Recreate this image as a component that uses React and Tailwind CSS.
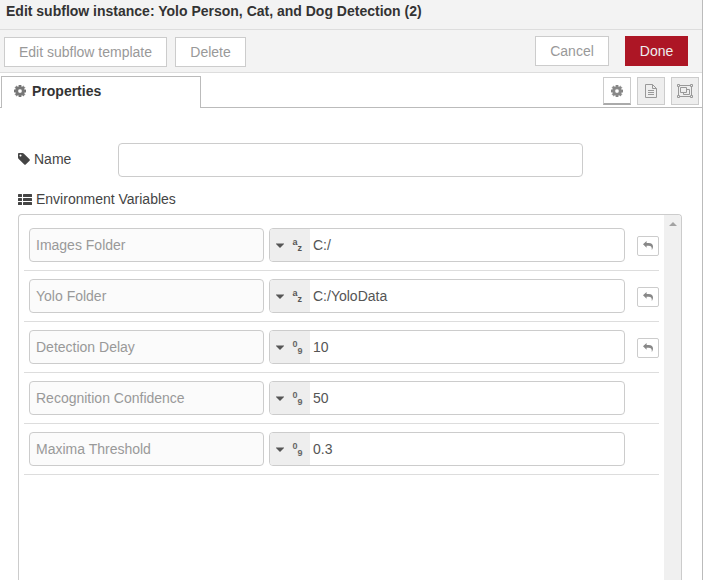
const COG =
  'M1024 896q0-106-75-181t-181-75-181 75-75 181 75 181 181 75 181-75 75-181zm512-109v222q0 12-8 23t-20 13l-185 28q-19 54-39 91 35 50 107 138 10 12 10 25t-9 23q-27 37-99 108t-94 71q-12 0-26-9l-138-108q-44 23-91 38-16 136-29 186-7 28-36 28h-222q-14 0-24.5-8.5t-11.5-21.5l-28-184q-49-16-90-37l-141 107q-10 9-25 9-14 0-25-11-126-114-165-168-7-10-7-23 0-12 8-23 15-21 51-66.5t54-70.5q-27-50-41-99l-183-27q-13-2-21-12.5t-8-23.5v-222q0-12 8-23t19-13l186-28q14-46 39-92-40-57-107-138-10-12-10-24 0-10 9-23 26-36 98.5-107.5t94.5-71.5q13 0 26 10l138 107q44-23 91-38 16-136 29-186 7-28 36-28h222q14 0 24.5 8.5t11.5 21.5l28 184q49 16 90 37l142-107q9-9 24-9 13 0 25 10 129 119 165 170 7 8 7 22 0 12-8 23-15 21-51 66.5t-54 70.5q26 50 41 98l183 28q13 2 21 12.5t8 23.5z';
const TAG =
  'M576 448q0-53-37.5-90.5t-90.5-37.5-90.5 37.5-37.5 90.5 37.5 90.5 90.5 37.5 90.5-37.5 37.5-90.5zm1067 576q0 53-37 90l-491 492q-39 37-91 37-53 0-90-37l-715-716q-38-37-64.5-101t-26.5-117v-416q0-52 38-90t90-38h416q53 0 117 26.5t102 64.5l715 714q37 39 37 91z';

const rows = [
  { label: 'Images Folder', type: 'str', value: 'C:/', reset: true },
  { label: 'Yolo Folder', type: 'str', value: 'C:/YoloData', reset: true },
  { label: 'Detection Delay', type: 'num', value: '10', reset: true },
  { label: 'Recognition Confidence', type: 'num', value: '50', reset: false },
  { label: 'Maxima Threshold', type: 'num', value: '0.3', reset: false },
];

function Cog({ className }) {
  return (
    <svg viewBox="0 128 1536 1536" className={className} fill="currentColor" stroke="currentColor" strokeWidth="50">
      <path d={COG} />
    </svg>
  );
}

function FileText() {
  return (
    <svg viewBox="0 0 12 14" className="h-3.5 w-3" fill="none" stroke="currentColor">
      <path d="M.5.5h7l4 4v9H.5zM7.5.5v4h4M3 6.5h6M3 8.5h6M3 10.5h6" />
    </svg>
  );
}

function ObjectGroup() {
  return (
    <svg viewBox="0 0 16 14" className="h-3.5 w-4" fill="none" stroke="currentColor">
      <path d="M3 1.5H13M3 12.5H13M1.5 3V11M14.5 3V11" />
      <path d="M.5.5h2v2h-2zM13.5.5h2v2h-2zM.5 11.5h2v2h-2zM13.5 11.5h2v2h-2z" />
      <path d="M3.5 3.5h6v5h-6zM9.5 5.5h3v5h-6v-2" />
    </svg>
  );
}

function ListIcon() {
  return (
    <svg viewBox="0 0 14 11" className="h-[11px] w-3.5" fill="currentColor">
      {[0, 4, 8].map((y) => (
        <g key={y}>
          <rect x="0" y={y} width="4" height="3" rx="0.5" />
          <rect x="5" y={y} width="9" height="3" rx="0.5" />
        </g>
      ))}
    </svg>
  );
}

function TypeGlyph({ type }) {
  const [a, b] = type === 'str' ? ['a', 'z'] : ['0', '9'];
  return (
    <svg viewBox="0 0 12 18" className="ml-[7px] h-[18px] w-3" fill={type === 'str' ? '#555' : '#666'} fontSize="9" fontWeight="bold">
      <text x="1.5" y={type === 'str' ? 8.5 : 9}>{a}</text>
      <text x="6.6" y={type === 'str' ? 15 : 15.5}>{b}</text>
    </svg>
  );
}

function Row({ label, type, value, reset }) {
  return (
    <div className="flex h-[51px] items-start border-b border-[#ddd] pl-[5px] pt-2">
      <div className="flex h-[34px] w-[235px] items-center rounded border border-[#ccc] bg-[#fbfbfb] px-1.5 text-[#999]">
        {label}
      </div>
      <div className="ml-[5px] flex h-[34px] w-[356px] overflow-hidden rounded border border-[#ccc]">
        <div className="flex w-10 items-center bg-[#eee] pl-1.5">
          <svg viewBox="0 0 8 5" className="mt-px h-[5px] w-2" fill="#555">
            <path d="M0 .5h8v.5L4 5 0 1z" />
          </svg>
          <TypeGlyph type={type} />
        </div>
        <div className="flex items-center pl-[3px] text-[#555]">{value}</div>
      </div>
      {reset && (
        <button className="ml-3 mt-2 flex h-5 w-[22px] items-center justify-center rounded-[2px] border border-[#ccc] text-[#888]">
          <svg viewBox="0 0 10 9" className="mb-px h-[9px] w-2.5" fill="currentColor">
            <path d="M0 3.3 3.6 0v2h2C8.8 2 10 3.6 10 5.6 10 7 9.5 8 8.8 9c.2-2.800-.6-4.200-3.200-4.200h-2v2z" />
          </svg>
        </button>
      )}
    </div>
  );
}

export default function App() {
  return (
    <div className="h-[580px] w-[704px] overflow-hidden bg-white font-['Liberation_Sans',Arial,sans-serif] text-sm leading-5 text-[#444]">
      <div className="flex h-full w-[703px] flex-col border-r border-[#bbb]">
        <header className="h-[30px] shrink-0 border-b border-[#ddd] bg-[#f3f3f3] pl-1.5 pt-px font-bold text-[#333]">
          Edit subflow instance: Yolo Person, Cat, and Dog Detection (2)
        </header>

        <div className="flex h-[43px] shrink-0 items-start border-b border-[#ddd] bg-[#f3f3f3] pl-1 pt-1.5 text-[#999]">
          <button className="mt-px h-[30px] w-[163px] border border-[#ccc] bg-white">Edit subflow template</button>
          <button className="ml-2 mt-px h-[30px] w-[71px] border border-[#ccc] bg-white">Delete</button>
          <button className="ml-auto h-[30px] w-[74px] border border-[#ccc] bg-white">Cancel</button>
          <button className="ml-4 mr-3.5 h-[30px] w-[63px] bg-[#ad1625] text-[#eee]">Done</button>
        </div>

        <div className="flex h-[35px] shrink-0 items-stretch pt-[3px]">
          <div className="w-px border-b border-[#bbb]" />
          <div className="flex w-[200px] items-center border-x border-t border-[#bbb] pb-1 pl-3 font-bold text-[#333]">
            <Cog className="mr-1.5 h-3 w-3 text-[#777]" />
            Properties
          </div>
          <div className="flex flex-1 items-start justify-end gap-1.5 border-b border-[#bbb] pr-[3px] pt-px text-[#999]">
            <div className="flex h-7 w-7 items-center justify-center border border-b-2 border-[#ccc] border-b-[#aaa] bg-white pt-px text-[#888]">
              <Cog className="h-3 w-3" />
            </div>
            <div className="flex h-7 w-7 items-center justify-center border border-[#ccc] bg-[#eee]">
              <FileText />
            </div>
            <div className="flex h-7 w-7 items-center justify-center border border-[#ccc] bg-[#eee]">
              <ObjectGroup />
            </div>
          </div>
        </div>

        <main className="flex min-h-0 flex-1 flex-col pl-[18px] pt-[35px]">
          <div className="flex h-[34px] shrink-0 items-center">
            <div className="flex w-[100px] items-center pb-0.5">
              <svg viewBox="128 128 1536 1536" className="mr-1 h-3 w-3" fill="currentColor">
                <path d={TAG} />
              </svg>
              Name
            </div>
            <div className="h-[34px] w-[465px] rounded border border-[#ccc]" />
          </div>
          <div className="mt-3 flex h-5 shrink-0 items-center gap-1">
            <ListIcon />
            Environment Variables
          </div>
          <div className="mt-[5px] flex min-h-0 w-[664px] flex-1 overflow-hidden rounded-t border border-b-0 border-[#ccc]">
            <div className="ml-[5px] mt-[5px] w-[635px]">
              {rows.map((row) => (
                <Row key={row.label} {...row} />
              ))}
            </div>
            <div className="ml-auto flex w-[17px] justify-center bg-[#f0f0f0] pt-[7px]">
              <svg viewBox="0 0 8 4" className="h-1 w-2" fill="#a3a3a3">
                <path d="M0 4L4 0l4 4z" />
              </svg>
            </div>
          </div>
        </main>
      </div>
    </div>
  );
}
